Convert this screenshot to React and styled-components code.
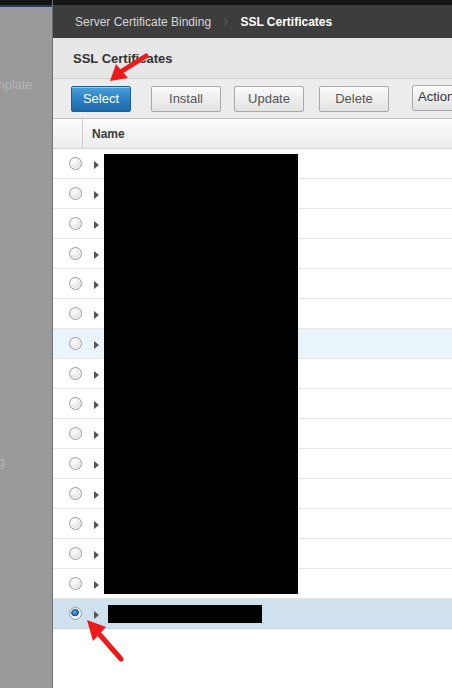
import React from "react";
import styled, { createGlobalStyle } from "styled-components";

const GlobalStyle = createGlobalStyle`
  html, body {
    margin: 0;
    padding: 0;
    background: #ffffff;
  }
  body {
    font-family: "Liberation Sans", Arial, sans-serif;
  }
`;

const rows = Array.from({ length: 16 }, (_, i) => ({
  id: i,
  hover: i === 6,
  selected: i === 15,
}));

export default function App() {
  return (
    <>
      <GlobalStyle />
      <Screen>
        <Backdrop>
          <BackdropTop />
          <FadedLabel top={78}>nplate</FadedLabel>
          <FadedLabel top={455}>g</FadedLabel>
        </Backdrop>

        <Panel>
          <PanelTop />
          <Breadcrumb>
            <Crumb>Server Certificate Binding</Crumb>
            <CrumbSep>›</CrumbSep>
            <Crumb current>SSL Certificates</Crumb>
          </Breadcrumb>

          <TitleBar>SSL Certificates</TitleBar>

          <Toolbar>
            <Button primary width={60}>Select</Button>
            <ToolSep />
            <Button>Install</Button>
            <Button gap={13}>Update</Button>
            <Button gap={15}>Delete</Button>
            <Button gap={23} width={60} raised>Action</Button>
          </Toolbar>

          <Table>
            <HeaderRow>
              <HeaderSpacer />
              <HeaderCell>Name</HeaderCell>
            </HeaderRow>
            <Body>
              {rows.map((r) => (
                <Row key={r.id} hover={r.hover} selected={r.selected}>
                  <RadioCell>
                    <Radio checked={r.selected} />
                  </RadioCell>
                  <Expander />
                  {r.selected && <InlineRedaction />}
                </Row>
              ))}
              <Redaction />
            </Body>
          </Table>
        </Panel>

        {/* annotation arrows drawn over the screenshot */}
        <Arrow viewBox="0 0 42 32" style={{ left: 107, top: 53 }} width="42" height="32">
          <path d="M39 3 L15 18" stroke="#ee1a1a" strokeWidth="5" strokeLinecap="round" />
          <polygon points="3,28 9,11 21,25" fill="#ee1a1a" />
        </Arrow>

        <Arrow viewBox="0 0 42 46" style={{ left: 84, top: 617 }} width="42" height="46">
          <path d="M37 42 L16 18" stroke="#ee1a1a" strokeWidth="5" strokeLinecap="round" />
          <polygon points="3,3 22,10 9,24" fill="#ee1a1a" />
        </Arrow>
      </Screen>
    </>
  );
}

const Screen = styled.div`
  position: relative;
  display: flex;
  width: 452px;
  height: 688px;
  overflow: hidden;
`;

const Backdrop = styled.div`
  position: relative;
  width: 52px;
  flex-shrink: 0;
  background: #9a9a9a;
`;

const BackdropTop = styled.div`
  height: 5px;
  background: #141414;
  border-bottom: 2px solid #2c3a6a;
`;

const FadedLabel = styled.div`
  position: absolute;
  top: ${(p) => p.top}px;
  left: -2px;
  font-size: 12.5px;
  color: #b2b6b9;
`;

const Panel = styled.div`
  flex: 1;
  display: flex;
  flex-direction: column;
  min-width: 0;
  background: #ffffff;
  border-left: 1px solid #707070;
  box-shadow: -1px 0 2px rgba(0, 0, 0, 0.35);
`;

const PanelTop = styled.div`
  height: 5px;
  background: #151515;
`;

const Breadcrumb = styled.div`
  height: 33px;
  display: flex;
  align-items: center;
  gap: 12px;
  padding-left: 22px;
  background: #3d3d3d;
  white-space: nowrap;
`;

const Crumb = styled.span`
  font-size: 12px;
  color: ${(p) => (p.current ? "#ffffff" : "#d6d6d6")};
  font-weight: ${(p) => (p.current ? "bold" : "normal")};
`;

const CrumbSep = styled.span`
  font-size: 16px;
  color: #5a5a5a;
  margin-top: -2px;
`;

const TitleBar = styled.div`
  height: 40px;
  display: flex;
  align-items: center;
  padding-left: 20px;
  background: #e7e7e7;
  font-size: 13px;
  font-weight: bold;
  color: #333333;
`;

const Toolbar = styled.div`
  height: 39px;
  display: flex;
  align-items: center;
  padding-left: 18px;
  background: #ececec;
  border-top: 1px solid #cfcfcf;
  white-space: nowrap;
`;

const Button = styled.div`
  flex-shrink: 0;
  box-sizing: border-box;
  width: ${(p) => p.width || 70}px;
  height: 26px;
  margin-left: ${(p) => p.gap || 0}px;
  margin-top: ${(p) => (p.raised ? -1 : 0)}px;
  display: flex;
  align-items: ${(p) => (p.raised ? "flex-start" : "center")};
  padding-top: ${(p) => (p.raised ? 3 : 0)}px;
  justify-content: ${(p) => (p.raised ? "flex-start" : "center")};
  padding-left: ${(p) => (p.raised ? 5 : 0)}px;
  font-size: 13px;
  border-radius: 2px;
  color: ${(p) => (p.primary ? "#ffffff" : p.raised ? "#333333" : "#555555")};
  background: ${(p) =>
    p.primary
      ? "linear-gradient(#4aa0dc, #2a7dbf 55%, #1f6aa8)"
      : "linear-gradient(#fbfbfb, #ececec 60%, #e2e2e2)"};
  border: 1px solid ${(p) => (p.primary ? "#1d5f94" : "#a9a9a9")};
  box-shadow: inset 0 1px 0 rgba(255, 255, 255, 0.45);
`;

const ToolSep = styled.div`
  width: 1px;
  height: 22px;
  margin: 0 8px 0 12px;
  background: #c4c4c4;
  box-shadow: 1px 0 0 #fafafa;
`;

const Table = styled.div`
  flex: 1;
  display: flex;
  flex-direction: column;
`;

const HeaderRow = styled.div`
  height: 29px;
  display: flex;
  background: linear-gradient(#fbfbfb, #ededed);
  border-top: 1px solid #c2c2c2;
  border-bottom: 1px solid #d2d2d2;
`;

const HeaderSpacer = styled.div`
  width: 29px;
  border-right: 1px solid #cfcfcf;
`;

const HeaderCell = styled.div`
  display: flex;
  align-items: center;
  padding-left: 9px;
  font-size: 12px;
  font-weight: bold;
  color: #3a3a3a;
`;

const Body = styled.div`
  position: relative;
`;

const Row = styled.div`
  height: 29px;
  display: flex;
  align-items: center;
  border-bottom: 1px solid ${(p) => (p.selected ? "#c3d7e6" : "#e6e6e6")};
  background: ${(p) =>
    p.selected ? "#cfe1ee" : p.hover ? "#eaf4fb" : "#ffffff"};
`;

const RadioCell = styled.div`
  width: 44px;
  display: flex;
  justify-content: center;
  box-sizing: border-box;
`;

const Radio = styled.span`
  box-sizing: border-box;
  width: 13px;
  height: 13px;
  border-radius: 50%;
  border: 1px solid #9c9c9c;
  background: ${(p) =>
    p.checked
      ? "radial-gradient(circle at 45% 40%, #6fb4ea 0, #1b5fa0 3px, #1a4f86 3.6px, #f4f4f4 4.2px, #dcdcdc 100%)"
      : "radial-gradient(circle at 40% 35%, #ffffff 0, #f0f0f0 35%, #cfcfcf 100%)"};
  box-shadow: inset 0 0 0 1px #f8f8f8;
`;

const Expander = styled.span`
  width: 0;
  height: 0;
  margin-left: -3px;
  margin-top: 2px;
  border-top: 4.5px solid transparent;
  border-bottom: 4.5px solid transparent;
  border-left: 5px solid #555555;
`;

const InlineRedaction = styled.span`
  width: 154px;
  height: 18px;
  margin-left: 9px;
  background: #000000;
`;

const Redaction = styled.div`
  position: absolute;
  top: 5px;
  left: 51px;
  width: 194px;
  height: 440px;
  background: #000000;
`;

const Arrow = styled.svg`
  position: absolute;
  pointer-events: none;
`;
